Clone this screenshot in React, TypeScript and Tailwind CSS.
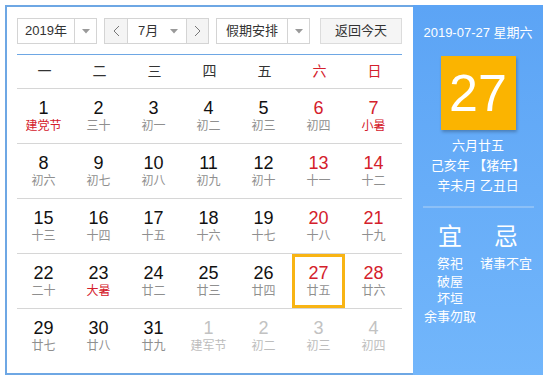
import React from "react"

type Day = { d: number; l: string; red?: boolean; lred?: boolean; other?: boolean; today?: boolean }

const weeks: Day[][] = [
  [
    { d: 1, l: "建党节", lred: true },
    { d: 2, l: "三十" },
    { d: 3, l: "初一" },
    { d: 4, l: "初二" },
    { d: 5, l: "初三" },
    { d: 6, l: "初四", red: true },
    { d: 7, l: "小暑", red: true, lred: true },
  ],
  [
    { d: 8, l: "初六" },
    { d: 9, l: "初七" },
    { d: 10, l: "初八" },
    { d: 11, l: "初九" },
    { d: 12, l: "初十" },
    { d: 13, l: "十一", red: true },
    { d: 14, l: "十二", red: true },
  ],
  [
    { d: 15, l: "十三" },
    { d: 16, l: "十四" },
    { d: 17, l: "十五" },
    { d: 18, l: "十六" },
    { d: 19, l: "十七" },
    { d: 20, l: "十八", red: true },
    { d: 21, l: "十九", red: true },
  ],
  [
    { d: 22, l: "二十" },
    { d: 23, l: "大暑", lred: true },
    { d: 24, l: "廿二" },
    { d: 25, l: "廿三" },
    { d: 26, l: "廿四" },
    { d: 27, l: "廿五", red: true, today: true },
    { d: 28, l: "廿六", red: true },
  ],
  [
    { d: 29, l: "廿七" },
    { d: 30, l: "廿八" },
    { d: 31, l: "廿九" },
    { d: 1, l: "建军节", other: true },
    { d: 2, l: "初二", other: true },
    { d: 3, l: "初三", other: true },
    { d: 4, l: "初四", other: true },
  ],
]

const weekdays = ["一", "二", "三", "四", "五", "六", "日"]

function Caret() {
  return (
    <svg width="8" height="5" viewBox="0 0 8 5">
      <path d="M0 0 L8 0 L4 4.5 Z" fill="#9a9a9a" />
    </svg>
  )
}

function Chevron({ dir }: { dir: "l" | "r" }) {
  return (
    <svg width="7" height="12" viewBox="0 0 7 12">
      <path
        d={dir === "l" ? "M6 1 L1 6 L6 11" : "M1 1 L6 6 L1 11"}
        fill="none"
        stroke="#777"
        strokeWidth="1"
      />
    </svg>
  )
}

export default function App() {
  return (
    <div
      className="w-[547px] h-[381px] bg-white pt-[5px] pl-[5px]"
      style={{ fontFamily: '"Liberation Sans", Arial, "Noto Sans CJK SC", sans-serif' }}
    >
      <div className="flex h-[370px]">
        {/* Left: calendar */}
        <div className="w-[408px] h-full border-2 border-r-0 border-[#6ea7e4] pt-[11px] pl-[10px] pr-[11px]">
          {/* Controls */}
          <div className="flex items-center h-[26px] text-[13px] text-[#333] whitespace-nowrap">
            <div className="flex h-full w-[80px] border border-[#d4d4d4]">
              <div className="w-[56px] flex items-center justify-center">2019年</div>
              <div className="flex-1 border-l border-[#d4d4d4] flex items-center justify-center">
                <Caret />
              </div>
            </div>
            <div className="flex h-full w-[105px] ml-[7px] border border-[#d4d4d4]">
              <div className="w-[23px] bg-[#f4f4f4] border-r border-[#d4d4d4] flex items-center justify-center">
                <Chevron dir="l" />
              </div>
              <div className="flex-1 flex items-center pl-[10px]">
                <span>7月</span>
                <span className="ml-[12px] flex items-center">
                  <Caret />
                </span>
              </div>
              <div className="w-[22px] bg-[#f4f4f4] border-l border-[#d4d4d4] flex items-center justify-center">
                <Chevron dir="r" />
              </div>
            </div>
            <div className="flex h-full w-[94px] ml-[7px] border border-[#d4d4d4]">
              <div className="w-[70px] flex items-center justify-center">假期安排</div>
              <div className="flex-1 border-l border-[#d4d4d4] flex items-center justify-center">
                <Caret />
              </div>
            </div>
            <div className="h-full w-[82px] ml-[10px] border border-[#dcdcdc] bg-[#f5f5f5] flex items-center justify-center">
              返回今天
            </div>
          </div>

          {/* Grid */}
          <div className="mt-[10px] border-t border-[#6ea7e4]">
            <div className="grid grid-cols-7 h-[34px] border-b border-[#d6d6d6] text-[14px]">
              {weekdays.map((w, i) => (
                <div
                  key={w}
                  className={`flex items-center justify-center ${i >= 5 ? "text-[#d4202b]" : "text-[#333]"}`}
                >
                  {w}
                </div>
              ))}
            </div>
            {weeks.map((row, ri) => (
              <div
                key={ri}
                className={`grid grid-cols-7 h-[55px] ${ri < weeks.length - 1 ? "border-b border-[#d6d6d6]" : ""}`}
              >
                {row.map((c, ci) => (
                  <div key={ci} className="flex">
                    <div
                      className={`w-[53px] h-full flex flex-col items-center justify-center ${
                        c.today ? "border-[3px] border-[#f8b414]" : ""
                      }`}
                    >
                      <div
                        className={`text-[18px] leading-[20px] ${
                          c.other ? "text-[#c2c2c2]" : c.red ? "text-[#d4202b]" : "text-[#111]"
                        }`}
                      >
                        {c.d}
                      </div>
                      <div
                        className={`text-[12px] leading-[17px] ${
                          c.other ? "text-[#bdbdbd]" : c.lred ? "text-[#d4202b]" : "text-[#8f8f8f]"
                        }`}
                      >
                        {c.l}
                      </div>
                    </div>
                  </div>
                ))}
              </div>
            ))}
          </div>
        </div>

        {/* Right: today detail */}
        <div className="w-[130px] h-full bg-gradient-to-b from-[#5ca4f5] to-[#72b6fb] text-white flex flex-col items-center whitespace-nowrap">
          <div className="mt-[19px] text-[13px] leading-[18px]">2019-07-27 星期六</div>
          <div className="mt-[14px] w-[75px] h-[74px] bg-[#fbb400] shadow-[1px_2px_3px_rgba(0,0,0,0.25)] flex items-center justify-center text-[52px] leading-none font-light">
            27
          </div>
          <div className="mt-[6px] text-[13px] leading-[20px] text-center">
            <div>六月廿五</div>
            <div>己亥年 【猪年】</div>
            <div>辛未月 乙丑日</div>
          </div>
          <div className="mt-[10px] w-[111px] h-[2px] bg-[#8cc0f7]" />
          <div className="mt-[15px] w-full flex">
            <div className="w-[74px] flex flex-col items-center">
              <div className="text-[24px] leading-[28px]">宜</div>
              <div className="mt-[4px] text-[13px] leading-[17.5px] text-center">
                <div>祭祀</div>
                <div>破屋</div>
                <div>坏垣</div>
                <div>余事勿取</div>
              </div>
            </div>
            <div className="w-[38px] flex flex-col items-center">
              <div className="text-[24px] leading-[28px]">忌</div>
              <div className="mt-[4px] text-[13px] leading-[17.5px] text-center">
                <div>诸事不宜</div>
              </div>
            </div>
          </div>
        </div>
      </div>
    </div>
  )
}
